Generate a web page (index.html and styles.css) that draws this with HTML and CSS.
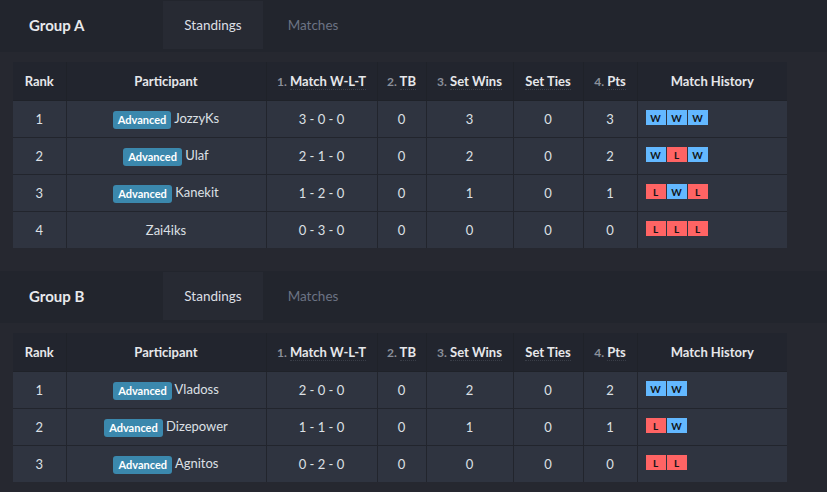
FILE: index.html
```html
<!DOCTYPE html>
<html>
<head>
<meta charset="utf-8">
<link rel="stylesheet" href="styles.css">
</head>
<body>
<div class="page">
  <section class="group">
    <div class="band">
      <div class="title">Group A</div>
      <div class="tab active">Standings</div>
      <div class="tab">Matches</div>
    </div>
    <table class="standings">
      <colgroup>
        <col class="c-rank"><col class="c-part"><col class="c-match"><col class="c-tb"><col class="c-sw"><col class="c-st"><col class="c-pts"><col class="c-hist">
      </colgroup>
      <thead>
        <tr>
          <th>Rank</th>
          <th>Participant</th>
          <th><span class="n">1.</span> <span class="u">Match W-L-T</span></th>
          <th><span class="n">2.</span> <span class="u">TB</span></th>
          <th><span class="n">3.</span> <span class="u">Set Wins</span></th>
          <th><span class="u">Set Ties</span></th>
          <th><span class="n">4.</span> <span class="u">Pts</span></th>
          <th>Match History</th>
        </tr>
      </thead>
      <tbody>
        <tr><td>1</td><td><span class="badge">Advanced</span> JozzyKs</td><td>3 - 0 - 0</td><td>0</td><td>3</td><td>0</td><td>3</td><td class="hist"><div class="chips"><span class="w">W</span><span class="w">W</span><span class="w">W</span></div></td></tr>
        <tr><td>2</td><td><span class="badge">Advanced</span> Ulaf</td><td>2 - 1 - 0</td><td>0</td><td>2</td><td>0</td><td>2</td><td class="hist"><div class="chips"><span class="w">W</span><span class="l">L</span><span class="w">W</span></div></td></tr>
        <tr><td>3</td><td><span class="badge">Advanced</span> Kanekit</td><td>1 - 2 - 0</td><td>0</td><td>1</td><td>0</td><td>1</td><td class="hist"><div class="chips"><span class="l">L</span><span class="w">W</span><span class="l">L</span></div></td></tr>
        <tr><td>4</td><td>Zai4iks</td><td>0 - 3 - 0</td><td>0</td><td>0</td><td>0</td><td>0</td><td class="hist"><div class="chips"><span class="l">L</span><span class="l">L</span><span class="l">L</span></div></td></tr>
      </tbody>
    </table>
  </section>
  <section class="group">
    <div class="band">
      <div class="title">Group B</div>
      <div class="tab active">Standings</div>
      <div class="tab">Matches</div>
    </div>
    <table class="standings">
      <colgroup>
        <col class="c-rank"><col class="c-part"><col class="c-match"><col class="c-tb"><col class="c-sw"><col class="c-st"><col class="c-pts"><col class="c-hist">
      </colgroup>
      <thead>
        <tr>
          <th>Rank</th>
          <th>Participant</th>
          <th><span class="n">1.</span> <span class="u">Match W-L-T</span></th>
          <th><span class="n">2.</span> <span class="u">TB</span></th>
          <th><span class="n">3.</span> <span class="u">Set Wins</span></th>
          <th><span class="u">Set Ties</span></th>
          <th><span class="n">4.</span> <span class="u">Pts</span></th>
          <th>Match History</th>
        </tr>
      </thead>
      <tbody>
        <tr><td>1</td><td><span class="badge">Advanced</span> Vladoss</td><td>2 - 0 - 0</td><td>0</td><td>2</td><td>0</td><td>2</td><td class="hist"><div class="chips"><span class="w">W</span><span class="w">W</span></div></td></tr>
        <tr><td>2</td><td><span class="badge">Advanced</span> Dizepower</td><td>1 - 1 - 0</td><td>0</td><td>1</td><td>0</td><td>1</td><td class="hist"><div class="chips"><span class="l">L</span><span class="w">W</span></div></td></tr>
        <tr><td>3</td><td><span class="badge">Advanced</span> Agnitos</td><td>0 - 2 - 0</td><td>0</td><td>0</td><td>0</td><td>0</td><td class="hist"><div class="chips"><span class="l">L</span><span class="l">L</span></div></td></tr>
      </tbody>
    </table>
  </section>
</div>
</body>
</html>
```
FILE: styles.css
```css
html, body {
  margin: 0;
  padding: 0;
  background: #262830;
  font-family: "Lato", "Liberation Sans", sans-serif;
  color: #dfe1e5;
  overflow: hidden;
}
.page {
  display: flex;
  flex-direction: column;
  gap: 23px;
}
.group {
  display: flex;
  flex-direction: column;
  gap: 10px;
}
.band {
  display: flex;
  align-items: stretch;
  height: 52px;
  box-sizing: border-box;
  padding: 1px 0 3px;
  background: #22252d;
}
.title {
  width: 134px;
  padding-left: 29px;
  display: flex;
  align-items: center;
  font-weight: 700;
  font-size: 15px;
  color: #e8e9ec;
}
.tab {
  width: 100px;
  display: flex;
  align-items: center;
  justify-content: center;
  font-size: 13.5px;
  color: #6c7384;
}
.tab.active {
  background: #272a33;
  color: #dcdfe4;
}
.standings {
  margin-left: 13px;
  width: 774px;
  border-collapse: collapse;
  table-layout: fixed;
  font-size: 13px;
}
.c-rank { width: 53px; }
.c-part { width: 200px; }
.c-match { width: 111px; }
.c-tb { width: 49px; }
.c-sw { width: 87px; }
.c-st { width: 70px; }
.c-pts { width: 54px; }
.c-hist { width: 150px; }
.standings th {
  height: 38px;
  background: #22252e;
  border: 1px solid #1f2229;
  border-top: none;
  font-weight: 700;
  font-size: 13px;
  color: #e6e7ea;
  text-align: center;
  padding: 0;
}
.standings th:first-child { border-left: none; }
.standings th:last-child { border-right: none; }
.standings .n {
  color: #8b909b;
  font-size: 12px;
}
.standings .u {
  border-bottom: 1px dotted #3a3e48;
}
.standings td {
  height: 36px;
  padding: 0;
  background: #2f3440;
  border: 1px solid #22252d;
  text-align: center;
  color: #dde0e5;
}
.standings td:first-child { border-left: none; }
.standings td:last-child { border-right: none; }
.standings tbody tr:last-child td { border-bottom: none; }
.badge {
  display: inline-block;
  background: #3b88ad;
  color: #ffffff;
  font-weight: 700;
  font-size: 11px;
  line-height: 18px;
  padding: 0 5px;
  border-radius: 3px;
  vertical-align: -1px;
}
.standings td.hist {
  text-align: left;
  padding-left: 8px;
}
.chips {
  display: flex;
  gap: 1px;
  margin-top: -3px;
}
.chips span {
  width: 20px;
  height: 15px;
  display: flex;
  align-items: center;
  justify-content: center;
  font-size: 10px;
  font-weight: 700;
  color: #111418;
}
.chips .w { background: #63b8ff; }
.chips .l { background: #ff6464; }
```
